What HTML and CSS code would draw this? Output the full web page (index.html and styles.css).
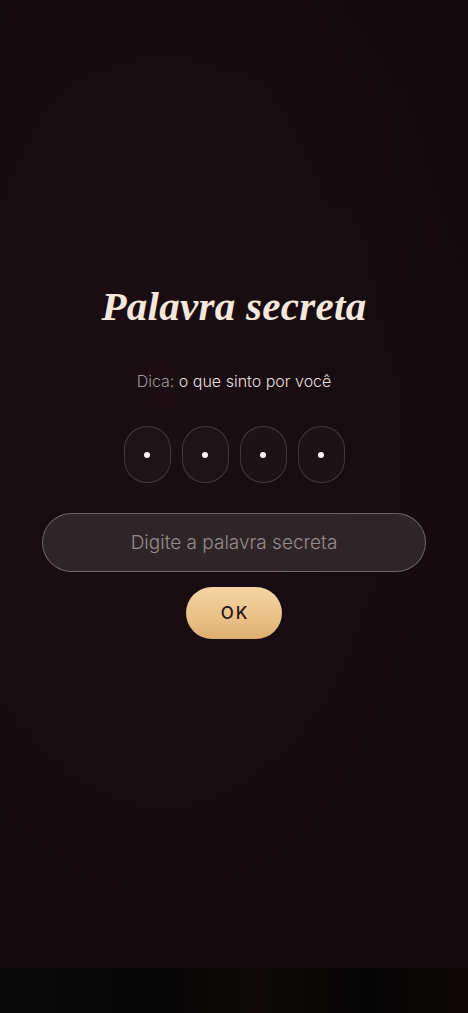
FILE: index.html
```html
<!doctype html>
<html>
<head>
    <meta charset="UTF-8">
    <link rel="stylesheet" href="styles.css">
</head>
<body>
<div class="screen">
    <div class="lock">
        <h1 class="lock-title">Palavra secreta</h1>
        <p class="lock-hint"><span class="hint-label">Dica:</span> o que sinto por você</p>
        <div class="pin-row">
            <div class="pin-cell"><span class="pin-dot"></span></div>
            <div class="pin-cell"><span class="pin-dot"></span></div>
            <div class="pin-cell"><span class="pin-dot"></span></div>
            <div class="pin-cell"><span class="pin-dot"></span></div>
        </div>
        <input class="secret-input" type="text" placeholder="Digite a palavra secreta">
        <button class="ok-btn">OK</button>
    </div>
</div>
<div class="bottom-bar"></div>
</body>
</html>
```

FILE: styles.css
```css
html, body {
    margin: 0;
    padding: 0;
    background-color: #080607;
}

body {
    width: 468px;
    height: 1013px;
    overflow: hidden;
    font-family: Inter, "Noto Sans", sans-serif;
}

.screen {
    height: 968px;
    background:
        radial-gradient(ellipse at 35% 40%, rgba(36, 18, 25, 0.45), rgba(0, 0, 0, 0) 70%),
        linear-gradient(180deg, #130a0e 0%, #150b0f 50%, #140b0e 100%);
}

.lock {
    display: flex;
    flex-direction: column;
    align-items: center;
    padding-top: 282px;
}

.lock-title {
    margin: 0;
    font-family: "Liberation Serif", serif;
    font-style: italic;
    font-weight: bold;
    font-size: 41px;
    line-height: 48px;
    color: #f6e7dc;
    letter-spacing: 0.3px;
}

.lock-hint {
    margin: 39px 0 0;
    font-size: 16px;
    font-weight: 300;
    line-height: 24px;
    color: #eadfdf;
}

.hint-label {
    color: #a19698;
}

.pin-row {
    display: flex;
    gap: 11px;
    margin-top: 33px;
}

.pin-cell {
    box-sizing: border-box;
    width: 47px;
    height: 57px;
    border: 1px solid rgba(255, 255, 255, 0.16);
    border-radius: 23px;
    background-color: rgba(255, 255, 255, 0.025);
    display: flex;
    align-items: center;
    justify-content: center;
}

.pin-dot {
    width: 6px;
    height: 6px;
    border-radius: 50%;
    background-color: #fbf2f2;
}

.secret-input {
    box-sizing: border-box;
    width: 384px;
    height: 59px;
    margin-top: 30px;
    border: 1px solid rgba(255, 255, 255, 0.3);
    border-radius: 30px;
    background-color: #2e2528;
    color: #eadfdf;
    font-family: Inter, "Noto Sans", sans-serif;
    font-size: 19px;
    font-weight: 300;
    text-align: center;
    outline: none;
}

.secret-input::placeholder {
    color: #958c8e;
}

.ok-btn {
    width: 96px;
    height: 52px;
    margin-top: 15px;
    border: none;
    border-radius: 26px;
    background: linear-gradient(180deg, #f4d5a2 0%, #e9c088 60%, #ddae70 100%);
    color: #2a1418;
    font-family: Inter, "Noto Sans", sans-serif;
    font-size: 17px;
    font-weight: 500;
    letter-spacing: 2px;
    padding: 0 0 0 2px;
}

.bottom-bar {
    height: 45px;
    background: linear-gradient(90deg, #0b0a0a 0%, #060505 35%, #0f0a08 55%, #050404 78%, #0e0807 100%);
}
```
